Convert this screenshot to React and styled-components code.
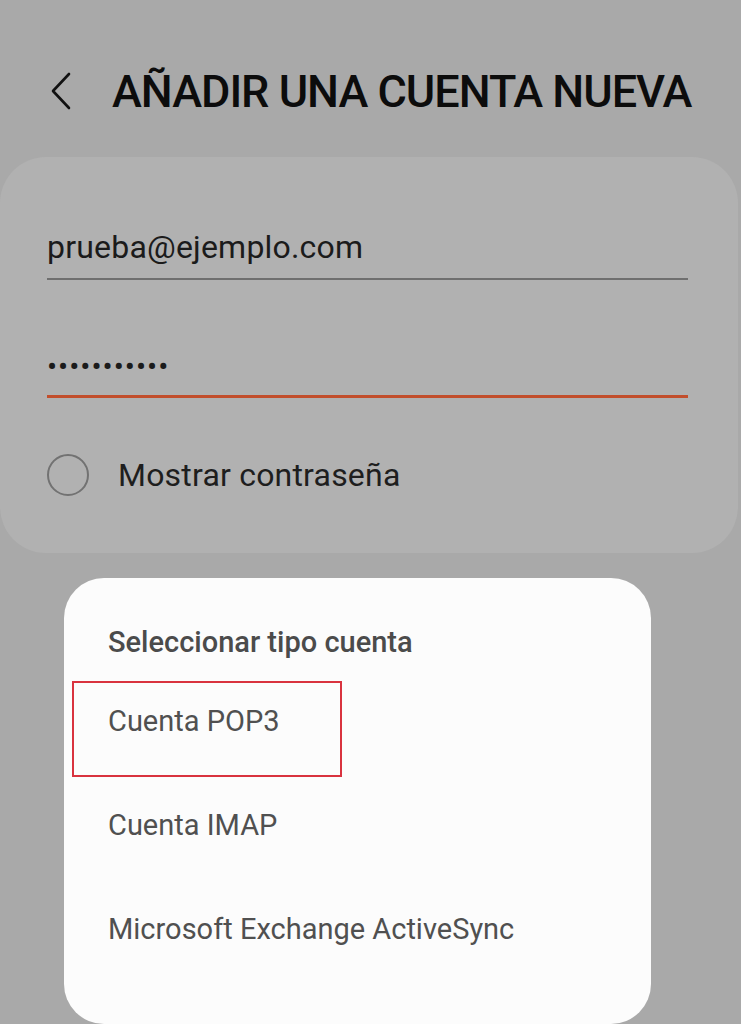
import styled, { createGlobalStyle } from 'styled-components';

const GlobalStyle = createGlobalStyle`
  html, body {
    margin: 0;
    padding: 0;
    background: #a9a9a9;
    font-family: Roboto, "Noto Sans", sans-serif;
  }
`;

const Screen = styled.div`
  width: 741px;
  height: 1024px;
  overflow: hidden;
  background: #a9a9a9;
  display: flex;
  flex-direction: column;
`;

const Header = styled.header`
  display: flex;
  align-items: center;
  gap: 38px;
  height: 70px;
  margin-top: 56px;
  padding-left: 48px;
`;

const BackButton = styled.button`
  border: 0;
  background: none;
  padding: 0;
  width: 26px;
  height: 40px;
  display: flex;
  align-items: center;
  justify-content: center;
  cursor: pointer;
`;

const Title = styled.h1`
  margin: 0;
  font-size: 45px;
  font-weight: 500;
  color: #0c0c0c;
  letter-spacing: -1px;
  white-space: nowrap;
`;

const FormCard = styled.section`
  margin: 31px 3px 0 0;
  height: 396px;
  background: #b1b1b1;
  border-radius: 46px;
  padding: 0 50px 0 47px;
  box-sizing: border-box;
  display: flex;
  flex-direction: column;
`;

const Field = styled.div`
  height: ${p => p.$height}px;
  display: flex;
  align-items: flex-end;
  border-bottom: ${p => (p.$active ? '3px solid #c24e2c' : '2px solid #6f6f6f')};
  box-sizing: border-box;
  padding-bottom: ${p => p.$pad}px;
  font-size: ${p => (p.$dots ? '30px' : '32px')};
  color: #1b1b1b;
  letter-spacing: ${p => (p.$dots ? '1px' : '0.2px')};
`;

const CheckRow = styled.label`
  display: flex;
  align-items: center;
  gap: 29px;
  margin-top: 56px;
  font-size: 32px;
  letter-spacing: 0.2px;
  color: #1e1e1e;
`;

const Radio = styled.span`
  width: 38px;
  height: 38px;
  border: 2px solid #727272;
  border-radius: 50%;
  flex: none;
`;

const Dialog = styled.section`
  margin: 25px 0 0 64px;
  width: 587px;
  flex: 1;
  background: #fcfcfc;
  border-radius: 40px;
  padding: 46px 0 0 44px;
  box-sizing: border-box;
  display: flex;
  flex-direction: column;
`;

const DialogTitle = styled.h2`
  margin: 0 0 43px;
  font-size: 29px;
  font-weight: 500;
  color: #4b4b4b;
  line-height: 36px;
`;

const OptionList = styled.ul`
  list-style: none;
  margin: 0;
  padding: 0;
`;

const Option = styled.li`
  position: relative;
  height: 104px;
  font-size: 29px;
  color: #505050;
  line-height: 36px;
`;

const Highlight = styled.span`
  position: absolute;
  left: -36px;
  top: -22px;
  width: 270px;
  height: 96px;
  border: 2px solid #d9333f;
  box-sizing: border-box;
`;

const options = ['Cuenta POP3', 'Cuenta IMAP', 'Microsoft Exchange ActiveSync'];

export default function App() {
  return (
    <Screen>
      <GlobalStyle />
      <Header>
        <BackButton aria-label="Atrás">
          <svg width="24" height="38" viewBox="0 0 24 38" fill="none">
            <path d="M20 2 L4 19 L20 36" stroke="#111" strokeWidth="2.6" strokeLinecap="round" strokeLinejoin="round" />
          </svg>
        </BackButton>
        <Title>AÑADIR UNA CUENTA NUEVA</Title>
      </Header>

      <FormCard>
        <Field $height={123} $pad={12}>prueba@ejemplo.com</Field>
        <Field $height={118} $pad={11} $active $dots>•••••••••••</Field>
        <CheckRow>
          <Radio />
          Mostrar contraseña
        </CheckRow>
      </FormCard>

      <Dialog>
        <DialogTitle>Seleccionar tipo cuenta</DialogTitle>
        <OptionList>
          {options.map((o, i) => (
            <Option key={o}>
              {i === 0 && <Highlight />}
              {o}
            </Option>
          ))}
        </OptionList>
      </Dialog>
    </Screen>
  );
}
